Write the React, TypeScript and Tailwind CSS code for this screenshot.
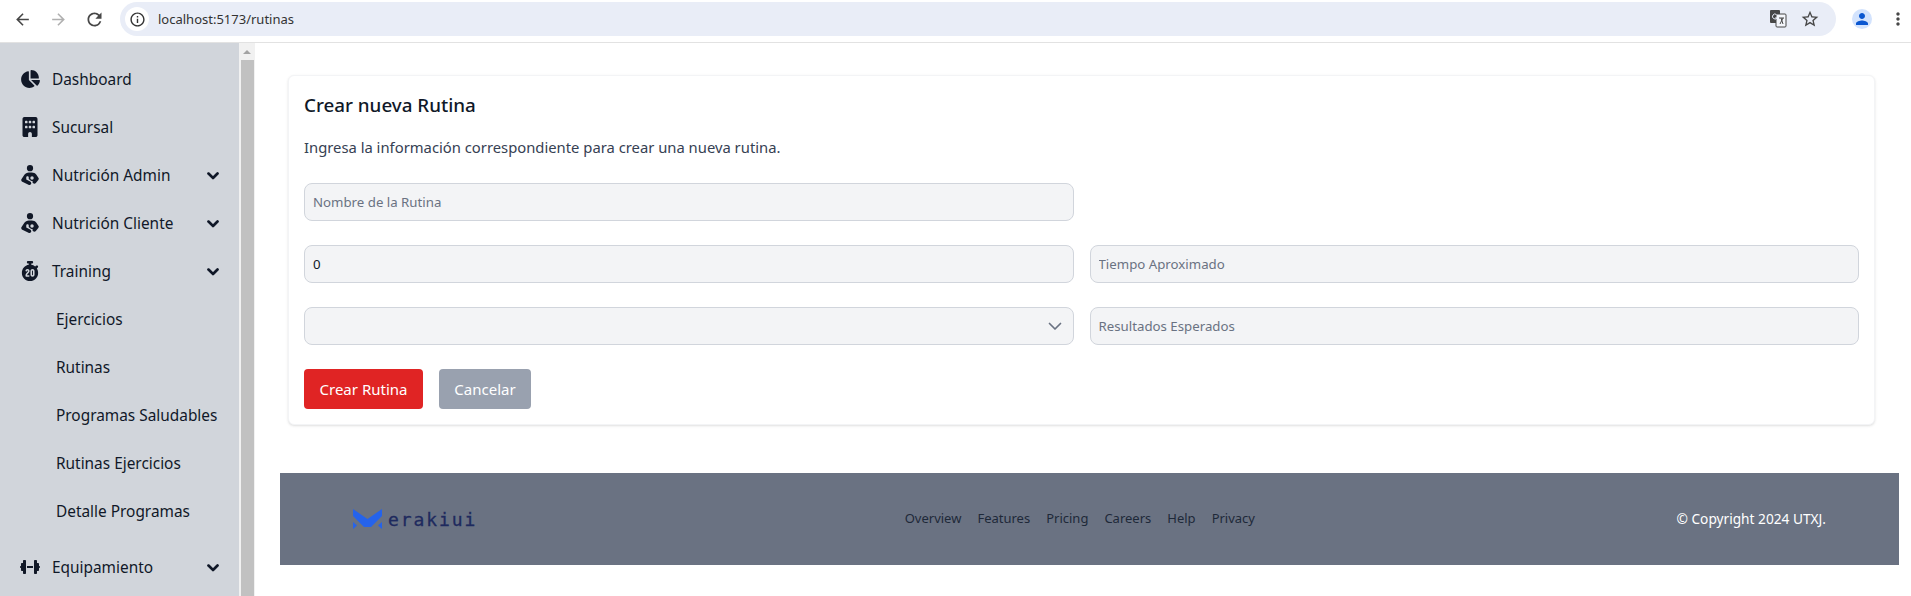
import React from 'react';
import { FaChartPie, FaBuilding, FaChevronDown, FaDumbbell, FaPersonBreastfeeding, FaStopwatch20 } from 'react-icons/fa6';
import { MdArrowBack, MdArrowForward, MdInfoOutline, MdMoreVert, MdPerson, MdRefresh, MdStarBorder } from 'react-icons/md';

const NavItem = ({ icon, label, arrow }: { icon: React.ReactNode; label: string; arrow?: boolean }) => (
  <a href="#" className="flex h-12 items-center pl-5 pr-5 text-[15.4px] leading-6 text-gray-900">
    <span className="flex w-5 justify-center text-[20px] text-[#111827]">{icon}</span>
    <span className="ml-3 flex-1 pt-px">{label}</span>
    {arrow && <FaChevronDown size={12} stroke="currentColor" strokeWidth={50} />}
  </a>
);

const SubItem = ({ label }: { label: string }) => (
  <a href="#" className="flex h-12 items-center pl-14 pt-px text-[15.4px] leading-6 text-gray-900">{label}</a>
);

const BrowserBar = () => (
  <header className="flex h-[43px] shrink-0 items-center border-b border-[#e2e2e2] bg-white pb-[4px]">
    <div className="flex items-center pl-1 text-[#474747]">
      <span className="flex w-9 justify-center"><MdArrowBack size={19} /></span>
      <span className="flex w-9 justify-center"><MdArrowForward size={19} className="text-[#b0b0b0]" /></span>
      <span className="flex w-9 justify-center"><MdRefresh size={21} /></span>
    </div>
    <div className="ml-2 flex h-[34px] flex-1 items-center rounded-full bg-[#e9edf7] pl-[5px] pr-4">
      <span className="flex h-6 w-6 items-center justify-center rounded-full bg-white text-[#333]">
        <MdInfoOutline size={17} />
      </span>
      <span className="ml-[9px] pt-px text-[13px] text-[#333]">localhost:5173/rutinas</span>
      <div className="ml-auto flex items-center gap-[13px] text-[#474747]">
        <svg width="18" height="18" viewBox="0 0 18 18">
          <rect x="1" y="0" width="10" height="13" rx="1" fill="#474747" />
          <rect x="7" y="4" width="10" height="13" rx="1" fill="#f4f6fb" stroke="#474747" />
          <path d="M7.500 4.500a2.500 2.500 0 1 0 .500 3.500H6" stroke="#e9edf7" strokeWidth="1" fill="none" />
          <path d="M10 8h5M12 8l2 6M14 8l-3 6" stroke="#474747" strokeWidth="1" fill="none" />
        </svg>
        <MdStarBorder size={20} />
      </div>
    </div>
    <span className="ml-4 flex h-5 w-5 items-center justify-center rounded-full bg-[#d3e3fd] text-[#0b57d0]">
      <MdPerson size={18} />
    </span>
    <MdMoreVert size={20} className="ml-4 mr-[3px] text-[#474747]" />
  </header>
);

const Sidebar = () => (
  <aside className="flex w-[255px] shrink-0 overflow-hidden">
    <nav className="w-[239px] shrink-0 bg-[#d1d5db] pt-[12px]">
      <NavItem icon={<FaChartPie />} label="Dashboard" />
      <NavItem icon={<FaBuilding />} label="Sucursal" />
      <NavItem icon={<FaPersonBreastfeeding />} label="Nutrición Admin" arrow />
      <NavItem icon={<FaPersonBreastfeeding />} label="Nutrición Cliente" arrow />
      <NavItem icon={<FaStopwatch20 />} label="Training" arrow />
      <div className="pb-2">
        <SubItem label="Ejercicios" />
        <SubItem label="Rutinas" />
        <SubItem label="Programas Saludables" />
        <SubItem label="Rutinas Ejercicios" />
        <SubItem label="Detalle Programas" />
      </div>
      <NavItem icon={<FaDumbbell />} label="Equipamiento" arrow />
    </nav>
    <div className="flex w-4 flex-col items-center bg-[#f1f1f1]">
      <div className="flex h-[17px] w-full items-center justify-center">
        <div className="h-0 w-0 border-x-[4px] border-b-[4px] border-x-transparent border-b-[#a3a3a3]" />
      </div>
      <div className="w-[13px] flex-1 bg-[#c1c1c1]" />
    </div>
  </aside>
);

const fieldClass =
  'h-[38px] w-full rounded-lg border border-gray-300 bg-gray-100 px-[8px] text-[13.250px] text-gray-900 placeholder:text-gray-500 outline-none';

const RutinaForm = () => (
  <section className="rounded-md border border-gray-100 bg-white px-[15px] pb-[15px] pt-[16px] shadow-sm">
    <h2 className="text-[18.800px] font-medium leading-[27px] text-gray-900">Crear nueva Rutina</h2>
    <p className="mt-[16px] text-[14.800px] leading-6 text-gray-700">Ingresa la información correspondiente para crear una nueva rutina.</p>
    <form className="mt-[24px] grid grid-cols-2 gap-x-4 gap-y-6">
      <input className={fieldClass} placeholder="Nombre de la Rutina" />
      <div />
      <input className={fieldClass} defaultValue="0" />
      <input className={fieldClass} placeholder="Tiempo Aproximado" />
      <div className="relative">
        <select className={`${fieldClass} appearance-none`} />
        <svg width="20" height="20" viewBox="0 0 20 20" fill="none" className="pointer-events-none absolute right-[9px] top-[9px] text-gray-500">
          <path d="m4.500 7.500 5.500 5.500 5.500-5.500" stroke="currentColor" strokeWidth="1.700" strokeLinecap="round" strokeLinejoin="round" />
        </svg>
      </div>
      <input className={fieldClass} placeholder="Resultados Esperados" />
      <div className="col-span-2 flex gap-4">
        <button type="button" className="h-10 w-[119px] rounded bg-[#e02424] text-[15px] text-white">Crear Rutina</button>
        <button type="button" className="h-10 w-[92px] rounded bg-gray-400 text-[15px] text-white">Cancelar</button>
      </div>
    </form>
  </section>
);

const Footer = () => (
  <footer className="mt-12 flex h-[92px] items-center justify-between bg-gray-500 px-[73px]">
    <a href="#" className="flex items-center gap-[6px]">
      <svg width="29" height="20" viewBox="0 0 29 20" fill="#2563eb">
        <path d="M0 0l14.500 10L29 0v7L18 18h-7L0 7z" />
        <path d="M0 13l4 3.500L0 20zM29 13l-4 3.500L29 20z" />
      </svg>
      <span className="font-['DejaVu_Sans_Mono',monospace] text-[18px] tracking-[1.900px] text-[#1e2a5e] [-webkit-text-stroke:0.3px_#1e2a5e]">erakiui</span>
    </a>
    <div className="ml-[6px] flex gap-4 text-[13px] text-gray-800">
      <a href="#">Overview</a>
      <a href="#">Features</a>
      <a href="#">Pricing</a>
      <a href="#">Careers</a>
      <a href="#">Help</a>
      <a href="#">Privacy</a>
    </div>
    <p className="text-[13.700px] text-white">© Copyright 2024 UTXJ.</p>
  </footer>
);

export default function App() {
  return (
    <div className="flex h-[596px] flex-col overflow-hidden bg-white font-['Noto_Sans',sans-serif]">
      <BrowserBar />
      <div className="flex min-h-0 flex-1">
        <Sidebar />
        <main className="flex-1 pl-[25px] pr-3 pt-8">
          <div className="pl-2 pr-6">
            <RutinaForm />
          </div>
          <Footer />
        </main>
      </div>
    </div>
  );
}
